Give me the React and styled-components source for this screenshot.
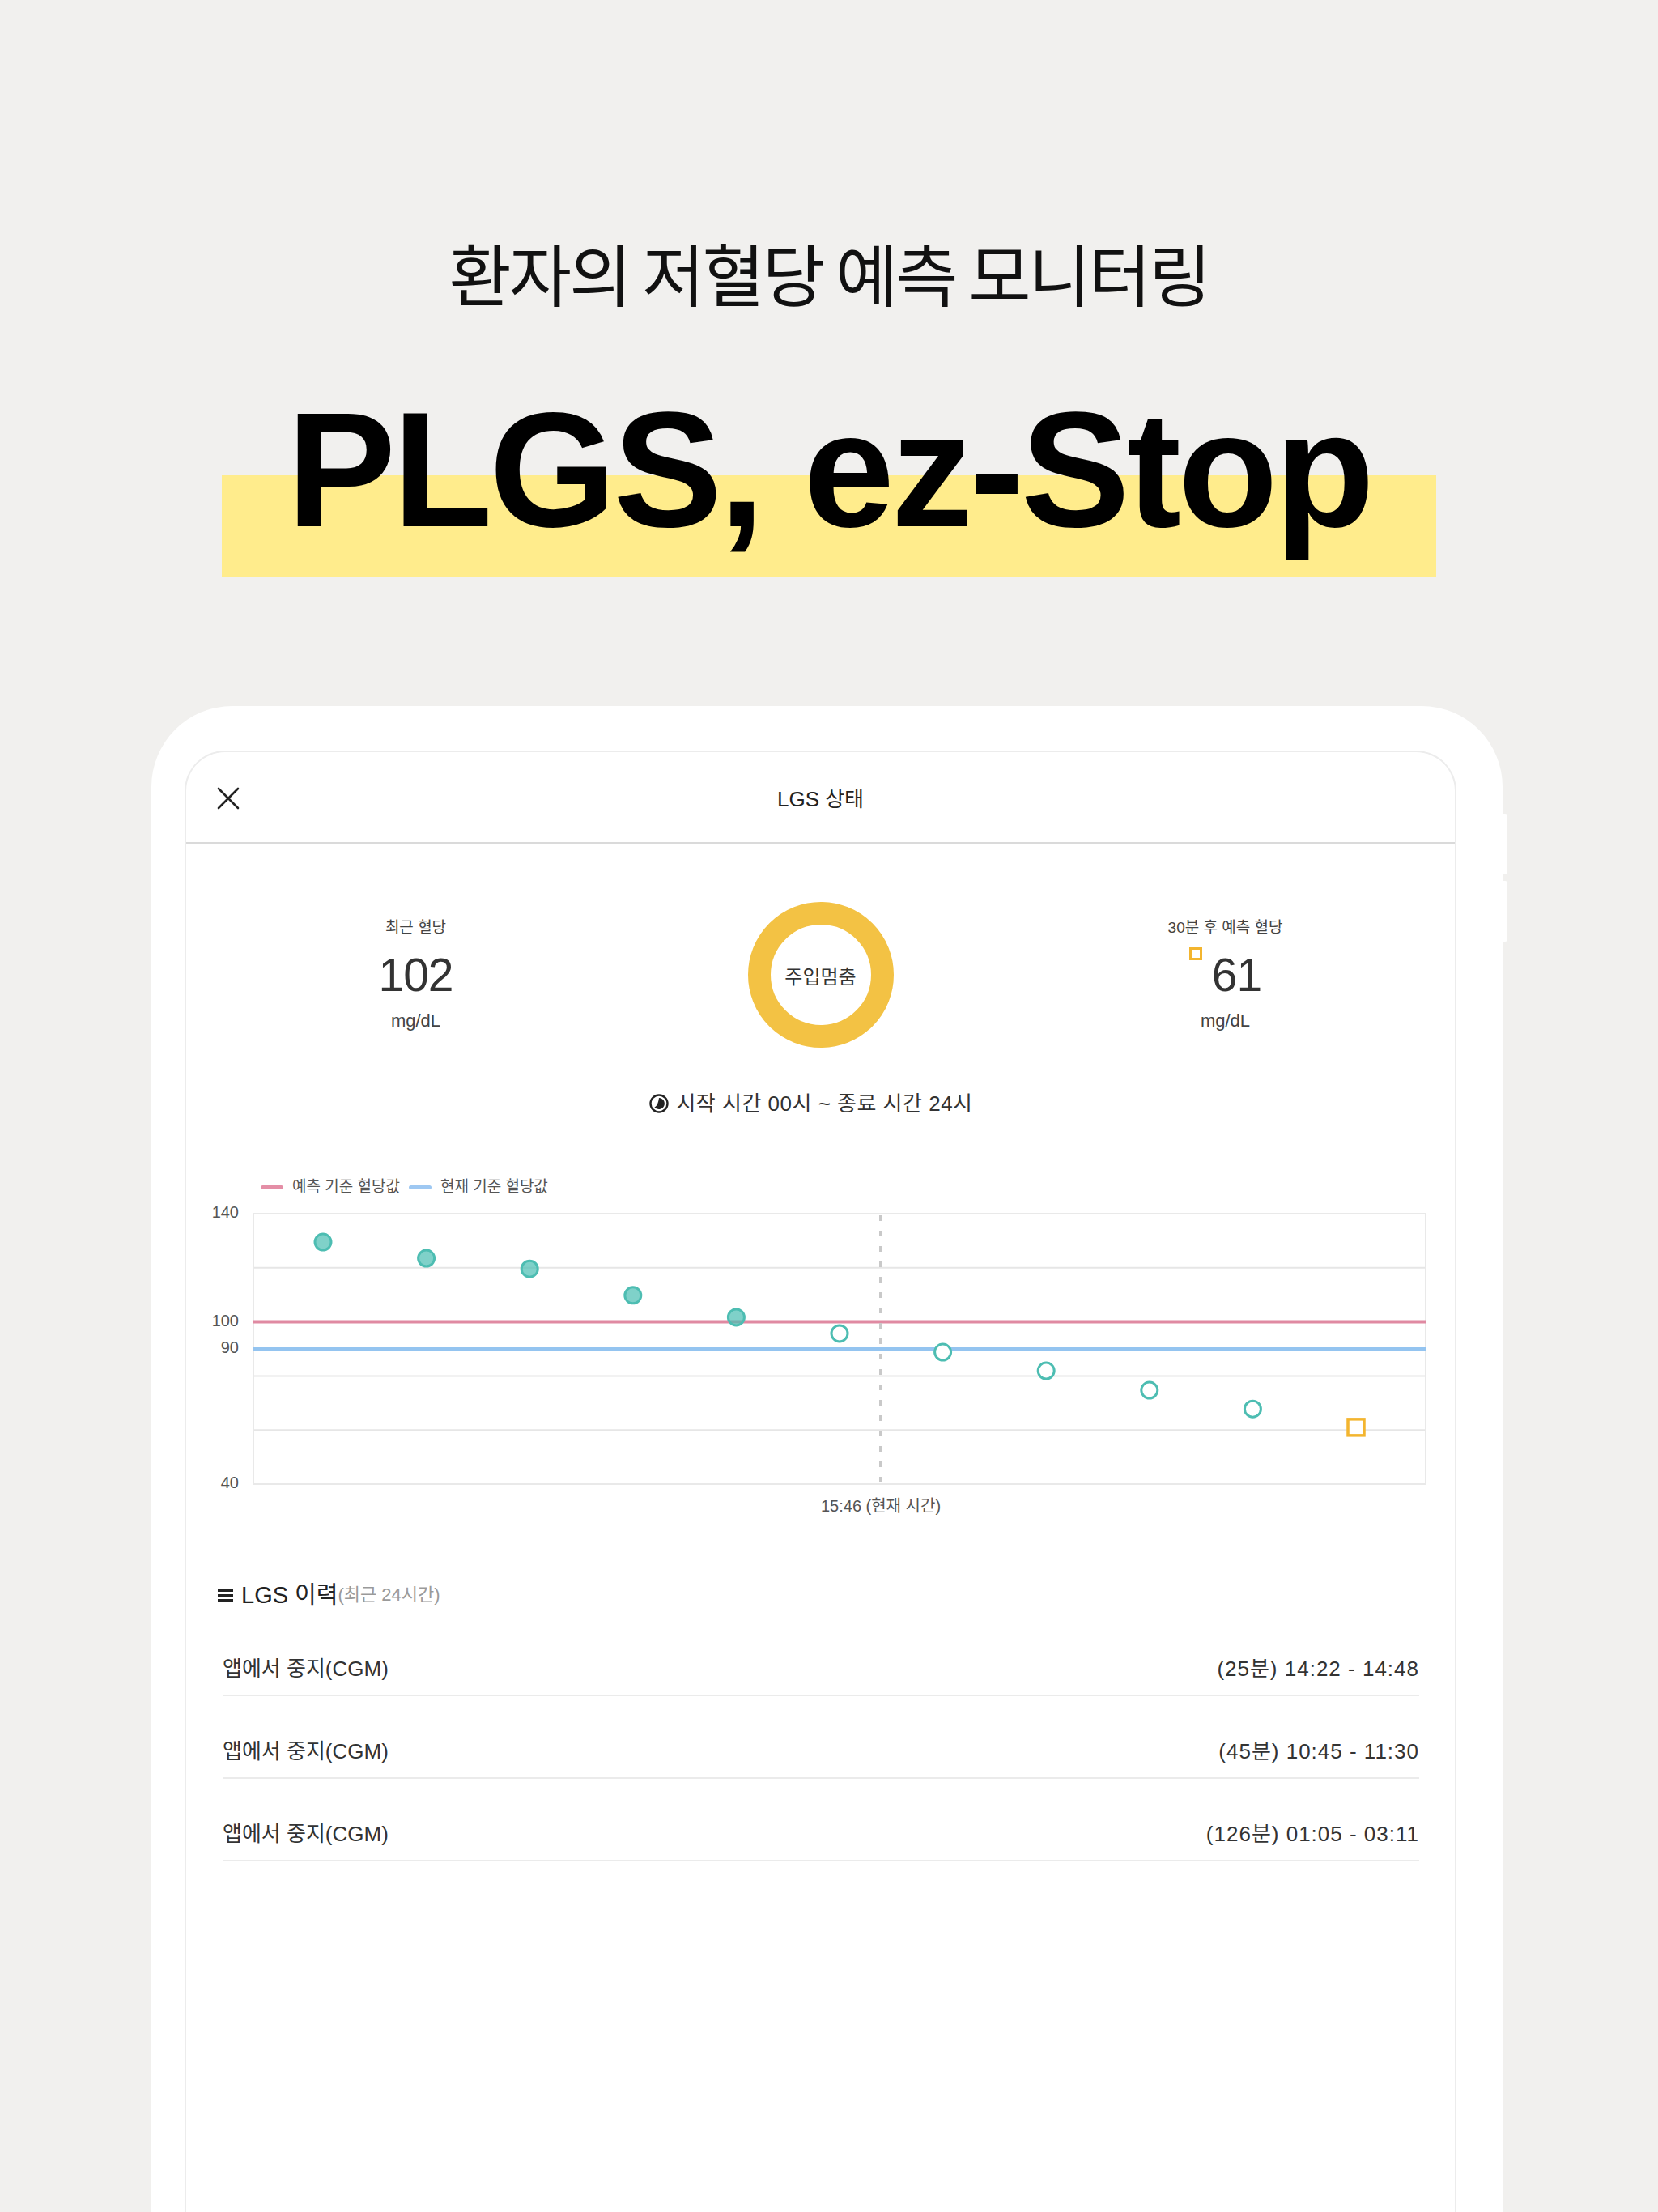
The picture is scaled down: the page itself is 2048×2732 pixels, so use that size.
import React from 'react'
import styled, { createGlobalStyle } from 'styled-components'

const GlobalStyle = createGlobalStyle`
  body {
    margin: 0;
    background: #f1f0ee;
    font-family: "Liberation Sans", "Noto Sans CJK KR", sans-serif;
    color: #222;
  }
`

const KR = `"Liberation Sans", "Noto Sans CJK KR", sans-serif`

// glucose readings, the last one is the 30 min forecast
const points = [129.5, 123.5, 119.6, 109.8, 101.7, 95.7, 88.8, 81.9, 74.7, 67.8, 61]
const history = [
  { label: '앱에서 중지(CGM)', time: '(25분) 14:22 - 14:48' },
  { label: '앱에서 중지(CGM)', time: '(45분) 10:45 - 11:30' },
  { label: '앱에서 중지(CGM)', time: '(126분) 01:05 - 03:11' },
]

const PLOT = { left: 48, right: 1496, top: 10, bottom: 344 }
const yOf = v => PLOT.top + (140 - v) * ((PLOT.bottom - PLOT.top) / 100)
const xOf = i => 134 + i * 127.6

const App = () => (
  <Page>
    <GlobalStyle />
    <Subtitle>환자의 저혈당 예측 모니터링</Subtitle>
    <TitleRow>
      <Title>PLGS, ez-Stop</Title>
    </TitleRow>

    <Device>
      <SideButton $top={133} />
      <SideButton $top={216} />
      <Screen>
        <Header>
          <CloseBtn>
            <svg width="28" height="28" viewBox="0 0 28 28">
              <path d="M2 2 L26 26 M26 2 L2 26" stroke="#222" strokeWidth="2.6" strokeLinecap="round" />
            </svg>
          </CloseBtn>
          <HeaderTitle>LGS 상태</HeaderTitle>
          <span />
        </Header>

        <Stats>
          <Stat>
            <StatLabel>최근 혈당</StatLabel>
            <StatValue>102</StatValue>
            <StatUnit>mg/dL</StatUnit>
          </Stat>
          <Stat>
            <Donut>주입멈춤</Donut>
          </Stat>
          <Stat>
            <StatLabel>30분 후 예측 혈당</StatLabel>
            <ValueRow>
              <ForecastMark />
              <StatValue>61</StatValue>
            </ValueRow>
            <StatUnit>mg/dL</StatUnit>
          </Stat>
        </Stats>

        <TimeRow>
          <svg width="26" height="26" viewBox="0 0 26 26">
            <circle cx="13" cy="13" r="10.5" fill="none" stroke="#222" strokeWidth="2.4" />
            <path d="M13 6 A7 7 0 1 1 7.5 17.5 C11 16 12.5 10 13 6 Z" fill="#222" />
          </svg>
          시작 시간 00시 ~ 종료 시간 24시
        </TimeRow>

        <Legend>
          <Swatch $color="#e48ea6" />
          <span>예측 기준 혈당값</span>
          <Swatch $color="#9ec8f2" />
          <span>현재 기준 혈당값</span>
        </Legend>

        <Chart width="1530" height="400" viewBox="-30 -10 1530 400">
          {[120, 80, 60].map(v => (
            <line key={v} x1={PLOT.left} x2={PLOT.right} y1={yOf(v)} y2={yOf(v)} stroke="#e6e6e6" strokeWidth="2" />
          ))}
          <rect x={PLOT.left} y={PLOT.top} width={PLOT.right - PLOT.left} height={PLOT.bottom - PLOT.top}
            fill="none" stroke="#e9e9e9" strokeWidth="2" />
          <line x1={PLOT.left} x2={PLOT.right} y1={yOf(100)} y2={yOf(100)} stroke="#e08aa2" strokeWidth="4" />
          <line x1={PLOT.left} x2={PLOT.right} y1={yOf(90)} y2={yOf(90)} stroke="#94c4f0" strokeWidth="4" />
          <line x1="823" x2="823" y1={PLOT.top + 2} y2={PLOT.bottom} stroke="#c9c9c9" strokeWidth="4" strokeDasharray="7 12" />

          {[140, 100, 90, 40].map(v => (
            <text key={v} x="30" y={yOf(v)} textAnchor="end" dominantBaseline="middle" fontSize="20" fill="#555" fontFamily={KR}>{v}</text>
          ))}

          {points.map((v, i) => {
            if (i === points.length - 1) {
              return <rect key={i} x={xOf(i) - 10} y={yOf(v) - 10} width="20" height="20" fill="#fff" stroke="#f3b52f" strokeWidth="3.5" />
            }
            const past = i < 5
            return (
              <circle key={i} cx={xOf(i)} cy={yOf(v)} r="10"
                fill={past ? 'rgba(72, 190, 178, 0.7)' : '#fff'} stroke="#4dbdb2" strokeWidth="3" />
            )
          })}

          <text x="823" y="373" textAnchor="middle" dominantBaseline="middle" fontSize="20" fill="#555" fontFamily={KR}>15:46 (현재 시간)</text>
        </Chart>

        <History>
          <HistoryHead>
            <svg width="19" height="17" viewBox="0 0 19 17">
              <rect x="0" y="1" width="19" height="3" fill="#222" />
              <rect x="0" y="7" width="19" height="3" fill="#222" />
              <rect x="0" y="13" width="19" height="3" fill="#222" />
            </svg>
            <span>LGS 이력</span>
            <Muted>(최근 24시간)</Muted>
          </HistoryHead>
          {history.map((h, i) => (
            <HistoryRow key={i}>
              <span>{h.label}</span>
              <Period>{h.time}</Period>
            </HistoryRow>
          ))}
        </History>
      </Screen>
    </Device>
  </Page>
)

const Page = styled.div`
  width: 2048px;
  height: 2732px;
  overflow: hidden;
  display: flex;
  flex-direction: column;
  align-items: center;
  padding-top: 284px;
  box-sizing: border-box;
`

const Subtitle = styled.h2`
  margin: 0;
  font-family: "Noto Sans CJK KR", sans-serif;
  font-weight: 400;
  font-size: 84px;
  line-height: 104px;
  color: #111;
  letter-spacing: -3px;
`

const TitleRow = styled.div`
  margin-top: 91px;
`

const Title = styled.h1`
  display: inline-block;
  margin: 0;
  padding: 0 80px 32px;
  font-family: "Liberation Sans", sans-serif;
  font-weight: 700;
  font-size: 202px;
  line-height: 202px;
  letter-spacing: -4px;
  color: #000;
  background: linear-gradient(to bottom, transparent 108px, #ffec8c 108px);
`

const Device = styled.div`
  position: relative;
  align-self: flex-start;
  margin: 159px 0 0 187px;
  width: 1669px;
  flex: 1;
  box-sizing: border-box;
  padding: 55px 57px 0 41px;
  background: #fff;
  border-radius: 100px 100px 0 0;
  display: flex;
  flex-direction: column;
`

const SideButton = styled.div`
  position: absolute;
  right: -6px;
  top: ${p => p.$top}px;
  width: 8px;
  height: 75px;
  background: #fff;
  border-radius: 0 3px 3px 0;
`

const Screen = styled.div`
  flex: 1;
  background: #fff;
  border: 2px solid #ececec;
  border-bottom: none;
  border-radius: 50px 50px 0 0;
  display: flex;
  flex-direction: column;
`

const Header = styled.div`
  height: 111px;
  border-bottom: 3px solid #dadada;
  display: grid;
  grid-template-columns: 1fr auto 1fr;
  align-items: center;
`

const CloseBtn = styled.div`
  padding-left: 38px;
  display: flex;
  align-items: center;
  padding-top: 2px;
`

const HeaderTitle = styled.div`
  font-size: 26px;
  color: #222;
  font-family: ${KR};
`

const Stats = styled.div`
  display: grid;
  grid-template-columns: repeat(3, 500px);
  justify-content: center;
  padding-top: 71px;
`

const Stat = styled.div`
  height: 180px;
  display: flex;
  flex-direction: column;
  align-items: center;
  justify-content: center;
`

const StatLabel = styled.div`
  font-size: 19px;
  line-height: 28px;
  color: #444;
  margin-bottom: 4px;
`

const StatValue = styled.div`
  font-size: 57px;
  line-height: 80px;
  color: #333;
  letter-spacing: -1px;
`

const StatUnit = styled.div`
  font-size: 22px;
  line-height: 30px;
  color: #444;
  margin-top: 2px;
`

const ValueRow = styled.div`
  display: flex;
  align-items: flex-start;
  gap: 12px;
`

const ForecastMark = styled.span`
  width: 16px;
  height: 16px;
  box-sizing: border-box;
  border: 3.5px solid #f3b52f;
  margin-top: 6px;
`

const Donut = styled.div`
  width: 180px;
  height: 180px;
  box-sizing: border-box;
  border-radius: 50%;
  border: 28px solid #f3c244;
  display: flex;
  align-items: center;
  justify-content: center;
  font-size: 24px;
  color: #333;
`

const TimeRow = styled.div`
  margin-top: 51px;
  padding-right: 24px;
  display: flex;
  align-items: center;
  justify-content: center;
  gap: 8px;
  font-size: 26px;
  line-height: 36px;
  color: #333;
  letter-spacing: 0.5px;
`

const Legend = styled.div`
  margin-top: 72px;
  padding-left: 92px;
  display: flex;
  align-items: center;
  gap: 8px;
  font-size: 19px;
  line-height: 26px;
  color: #555;

  span + span {
    margin-left: 3px;
  }
`

const Swatch = styled.span`
  width: 28px;
  height: 5px;
  border-radius: 3px;
  background: ${p => p.$color};
`

const Chart = styled.svg`
  display: block;
  margin: 0 0 0 5px;
`

const History = styled.div`
  margin-top: 73px;
  padding: 0 44px 0 45px;
`

const HistoryHead = styled.div`
  display: flex;
  align-items: center;
  gap: 10px;
  margin: 0 0 5px -6px;
  font-size: 29px;
  line-height: 36px;
  color: #222;
`

const Muted = styled.span`
  margin-left: -10px;
  font-size: 22px;
  color: #9a9a9a;
`

const HistoryRow = styled.div`
  height: 100px;
  border-bottom: 2px solid #ebebeb;
  display: flex;
  align-items: flex-end;
  justify-content: space-between;
  font-size: 26px;
  line-height: 28px;
  color: #333;

  span {
    margin-bottom: 18px;
  }
`

const Period = styled.span`
  letter-spacing: 1px;
`

export default App
